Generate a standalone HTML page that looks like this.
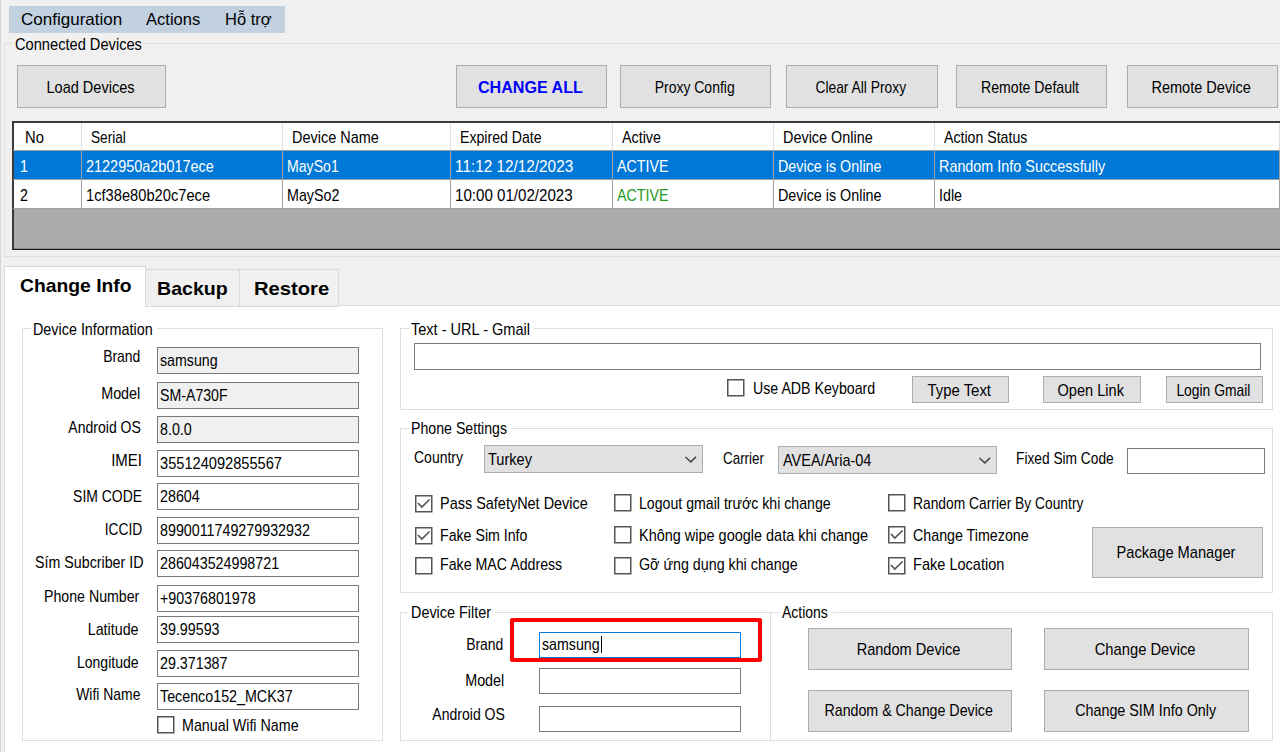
<!DOCTYPE html>
<html><head><meta charset="utf-8"><style>
html,body{margin:0;padding:0;}
body{width:1280px;height:752px;overflow:hidden;position:relative;background:#f0f0f0;font-family:"Liberation Sans",sans-serif;}
.a{position:absolute;box-sizing:border-box;}
.t{position:absolute;white-space:pre;line-height:1;}
</style></head><body>
<div class='a' style='left:0px;top:0px;width:1px;height:752px;background:#d6d6d6'></div>
<div class='a' style='left:9px;top:6px;width:276px;height:27px;background:#c2d1e0;'></div>
<span class='t' style='left:21.47px;top:11.43px;font-size:16.5px;transform:scaleX(1.031);transform-origin:0 0;color:#000;'>Configuration</span>
<span class='t' style='left:146.00px;top:11.43px;font-size:16.5px;transform:scaleX(1.002);transform-origin:0 0;color:#000;'>Actions</span>
<span class='t' style='left:225.00px;top:11.43px;font-size:16.5px;transform:scaleX(1.0);transform-origin:0 0;color:#000;'>Hỗ trợ</span>
<div class='a' style='left:4px;top:43px;width:1287px;height:1px;background:#dedede'></div>
<div class='a' style='left:4px;top:43px;width:1px;height:214px;background:#dedede'></div>
<div class='a' style='left:4px;top:256px;width:1287px;height:1px;background:#dedede'></div>
<div class='a' style='left:12.5px;top:41px;width:133.0px;height:5px;background:#f0f0f0;'></div>
<span class='t' style='left:14.64px;top:36.21px;font-size:17.0px;transform:scaleX(0.861);transform-origin:0 0;color:#000;'>Connected Devices</span>
<div class='a' style='left:17px;top:65px;width:149px;height:43px;background:#e1e1e1;box-sizing:border-box;border:1px solid #adadad;'></div>
<div class='a' style='left:-209.70px;top:79.21px;width:600px;text-align:center;line-height:1;'><span style='display:inline-block;white-space:pre;font-size:17.0px;line-height:1;transform:scaleX(0.8549);transform-origin:50% 0;color:#000;'>Load Devices</span></div>
<div class='a' style='left:456px;top:65px;width:151px;height:43px;background:#e1e1e1;box-sizing:border-box;border:1px solid #adadad;'></div>
<div class='a' style='left:230.30px;top:79.21px;width:600px;text-align:center;line-height:1;'><span style='display:inline-block;white-space:pre;font-size:17.0px;line-height:1;transform:scaleX(0.9473);transform-origin:50% 0;color:#0000ff;font-weight:bold;'>CHANGE ALL</span></div>
<div class='a' style='left:620px;top:65px;width:151px;height:43px;background:#e1e1e1;box-sizing:border-box;border:1px solid #adadad;'></div>
<div class='a' style='left:394.30px;top:79.21px;width:600px;text-align:center;line-height:1;'><span style='display:inline-block;white-space:pre;font-size:17.0px;line-height:1;transform:scaleX(0.8221);transform-origin:50% 0;color:#000;'>Proxy Config</span></div>
<div class='a' style='left:786px;top:65px;width:152px;height:43px;background:#e1e1e1;box-sizing:border-box;border:1px solid #adadad;'></div>
<div class='a' style='left:560.80px;top:79.21px;width:600px;text-align:center;line-height:1;'><span style='display:inline-block;white-space:pre;font-size:17.0px;line-height:1;transform:scaleX(0.8136);transform-origin:50% 0;color:#000;'>Clear All Proxy</span></div>
<div class='a' style='left:956px;top:65px;width:151px;height:43px;background:#e1e1e1;box-sizing:border-box;border:1px solid #adadad;'></div>
<div class='a' style='left:730.30px;top:79.21px;width:600px;text-align:center;line-height:1;'><span style='display:inline-block;white-space:pre;font-size:17.0px;line-height:1;transform:scaleX(0.8291);transform-origin:50% 0;color:#000;'>Remote Default</span></div>
<div class='a' style='left:1127px;top:65px;width:151px;height:43px;background:#e1e1e1;box-sizing:border-box;border:1px solid #adadad;'></div>
<div class='a' style='left:901.30px;top:79.21px;width:600px;text-align:center;line-height:1;'><span style='display:inline-block;white-space:pre;font-size:17.0px;line-height:1;transform:scaleX(0.8557);transform-origin:50% 0;color:#000;'>Remote Device</span></div>
<div class='a' style='left:12px;top:121px;width:1279px;height:129px;background:#ababab;box-sizing:border-box;border:2px solid #3a3a3a;border-right:none;border-bottom:1px solid #1e1e1e;'></div>
<div class='a' style='left:14px;top:248px;width:1277px;height:1px;background:#8c8c8c'></div>
<div class='a' style='left:14px;top:123px;width:1277px;height:27px;background:#ffffff;'></div>
<div class='a' style='left:14px;top:150px;width:1277px;height:29px;background:#0078d7;'></div>
<div class='a' style='left:14px;top:180px;width:1277px;height:29px;background:#ffffff;'></div>
<div class='a' style='left:13px;top:150px;width:1278px;height:1px;background:#a0a0a0'></div>
<div class='a' style='left:13px;top:179px;width:1278px;height:1px;background:#a0a0a0'></div>
<div class='a' style='left:13px;top:208px;width:1278px;height:1px;background:#a0a0a0'></div>
<div class='a' style='left:81px;top:123px;width:1px;height:27px;background:#e0e0e0'></div>
<div class='a' style='left:81px;top:150px;width:1px;height:59px;background:#a0a0a0'></div>
<div class='a' style='left:282px;top:123px;width:1px;height:27px;background:#e0e0e0'></div>
<div class='a' style='left:282px;top:150px;width:1px;height:59px;background:#a0a0a0'></div>
<div class='a' style='left:450px;top:123px;width:1px;height:27px;background:#e0e0e0'></div>
<div class='a' style='left:450px;top:150px;width:1px;height:59px;background:#a0a0a0'></div>
<div class='a' style='left:612px;top:123px;width:1px;height:27px;background:#e0e0e0'></div>
<div class='a' style='left:612px;top:150px;width:1px;height:59px;background:#a0a0a0'></div>
<div class='a' style='left:773px;top:123px;width:1px;height:27px;background:#e0e0e0'></div>
<div class='a' style='left:773px;top:150px;width:1px;height:59px;background:#a0a0a0'></div>
<div class='a' style='left:934px;top:123px;width:1px;height:27px;background:#e0e0e0'></div>
<div class='a' style='left:934px;top:150px;width:1px;height:59px;background:#a0a0a0'></div>
<div class='a' style='left:1279px;top:123px;width:1px;height:27px;background:#e0e0e0'></div>
<div class='a' style='left:1279px;top:150px;width:1px;height:59px;background:#a0a0a0'></div>
<span class='t' style='left:24.73px;top:129.41px;font-size:17.0px;transform:scaleX(0.87);transform-origin:0 0;color:#000;'>No</span>
<span class='t' style='left:91.20px;top:129.41px;font-size:17.0px;transform:scaleX(0.8);transform-origin:0 0;color:#000;'>Serial</span>
<span class='t' style='left:292.15px;top:129.41px;font-size:17.0px;transform:scaleX(0.851);transform-origin:0 0;color:#000;'>Device Name</span>
<span class='t' style='left:460.17px;top:129.41px;font-size:17.0px;transform:scaleX(0.8299);transform-origin:0 0;color:#000;'>Expired Date</span>
<span class='t' style='left:622.16px;top:129.41px;font-size:17.0px;transform:scaleX(0.84);transform-origin:0 0;color:#000;'>Active</span>
<span class='t' style='left:783.15px;top:129.41px;font-size:17.0px;transform:scaleX(0.8481);transform-origin:0 0;color:#000;'>Device Online</span>
<span class='t' style='left:944.17px;top:129.41px;font-size:17.0px;transform:scaleX(0.832);transform-origin:0 0;color:#000;'>Action Status</span>
<span class='t' style='left:19.66px;top:157.71px;font-size:17.0px;transform:scaleX(0.84);transform-origin:0 0;color:#ffffff;'>1</span>
<span class='t' style='left:85.65px;top:157.71px;font-size:17.0px;transform:scaleX(0.8503);transform-origin:0 0;color:#ffffff;'>2122950a2b017ece</span>
<span class='t' style='left:286.67px;top:157.71px;font-size:17.0px;transform:scaleX(0.8295);transform-origin:0 0;color:#ffffff;'>MaySo1</span>
<span class='t' style='left:454.60px;top:157.71px;font-size:17.0px;transform:scaleX(0.9015);transform-origin:0 0;color:#ffffff;'>11:12 12/12/2023</span>
<span class='t' style='left:616.66px;top:157.71px;font-size:17.0px;transform:scaleX(0.8377);transform-origin:0 0;color:#ffffff;'>ACTIVE</span>
<span class='t' style='left:777.66px;top:157.71px;font-size:17.0px;transform:scaleX(0.843);transform-origin:0 0;color:#ffffff;'>Device is Online</span>
<span class='t' style='left:938.65px;top:157.71px;font-size:17.0px;transform:scaleX(0.8456);transform-origin:0 0;color:#ffffff;'>Random Info Successfully</span>
<span class='t' style='left:19.66px;top:186.71px;font-size:17.0px;transform:scaleX(0.84);transform-origin:0 0;color:#000;'>2</span>
<span class='t' style='left:85.64px;top:186.71px;font-size:17.0px;transform:scaleX(0.8634);transform-origin:0 0;color:#000;'>1cf38e80b20c7ece</span>
<span class='t' style='left:286.66px;top:186.71px;font-size:17.0px;transform:scaleX(0.84);transform-origin:0 0;color:#000;'>MaySo2</span>
<span class='t' style='left:454.61px;top:186.71px;font-size:17.0px;transform:scaleX(0.8885);transform-origin:0 0;color:#000;'>10:00 01/02/2023</span>
<span class='t' style='left:616.66px;top:186.71px;font-size:17.0px;transform:scaleX(0.8377);transform-origin:0 0;color:#1e9a1e;'>ACTIVE</span>
<span class='t' style='left:777.66px;top:186.71px;font-size:17.0px;transform:scaleX(0.843);transform-origin:0 0;color:#000;'>Device is Online</span>
<span class='t' style='left:938.66px;top:186.71px;font-size:17.0px;transform:scaleX(0.84);transform-origin:0 0;color:#000;'>Idle</span>
<div class='a' style='left:4px;top:305px;width:1287px;height:456px;background:#ffffff;box-sizing:border-box;border:1px solid #dcdcdc;'></div>
<div class='a' style='left:145px;top:269px;width:96px;height:38px;background:#f0f0f0;box-sizing:border-box;border:1px solid #d9d9d9;'></div>
<div class='a' style='left:239px;top:269px;width:100px;height:38px;background:#f0f0f0;box-sizing:border-box;border:1px solid #d9d9d9;'></div>
<div class='a' style='left:4px;top:266px;width:142px;height:41px;background:#ffffff;box-sizing:border-box;border:1px solid #d9d9d9;border-bottom:none;'></div>
<span class='t' style='left:19.88px;top:276.32px;font-size:19px;transform:scaleX(1.0157);transform-origin:0 0;color:#000;font-weight:bold;'>Change Info</span>
<span class='t' style='left:156.97px;top:278.52px;font-size:19px;transform:scaleX(1.0299);transform-origin:0 0;color:#000;font-weight:bold;'>Backup</span>
<span class='t' style='left:253.64px;top:278.52px;font-size:19px;transform:scaleX(1.0623);transform-origin:0 0;color:#000;font-weight:bold;'>Restore</span>
<div class='a' style='left:22px;top:328px;width:361px;height:1px;background:#dedede'></div>
<div class='a' style='left:22px;top:328px;width:1px;height:413px;background:#dedede'></div>
<div class='a' style='left:22px;top:740px;width:361px;height:1px;background:#dedede'></div>
<div class='a' style='left:382px;top:328px;width:1px;height:413px;background:#dedede'></div>
<div class='a' style='left:30.5px;top:326px;width:126.0px;height:5px;background:#ffffff;'></div>
<span class='t' style='left:32.66px;top:320.71px;font-size:17.0px;transform:scaleX(0.8446);transform-origin:0 0;color:#000;'>Device Information</span>
<span class='t' style='right:1139.38px;top:347.91px;font-size:17.0px;transform:scaleX(0.8205);transform-origin:100% 0;color:#000;'>Brand</span>
<div class='a' style='left:157px;top:347px;width:202px;height:27px;background:#f0f0f0;box-sizing:border-box;border:1px solid #7a7a7a;'></div>
<span class='t' style='left:160.16px;top:351.51px;font-size:17.0px;transform:scaleX(0.8358);transform-origin:0 0;color:#000;'>samsung</span>
<span class='t' style='right:1139.35px;top:385.21px;font-size:17.0px;transform:scaleX(0.8455);transform-origin:100% 0;color:#000;'>Model</span>
<div class='a' style='left:157px;top:382px;width:202px;height:27px;background:#f0f0f0;box-sizing:border-box;border:1px solid #7a7a7a;'></div>
<span class='t' style='left:160.17px;top:386.51px;font-size:17.0px;transform:scaleX(0.8325);transform-origin:0 0;color:#000;'>SM-A730F</span>
<span class='t' style='right:1138.87px;top:419.21px;font-size:17.0px;transform:scaleX(0.8253);transform-origin:100% 0;color:#000;'>Android OS</span>
<div class='a' style='left:157px;top:416px;width:202px;height:27px;background:#f0f0f0;box-sizing:border-box;border:1px solid #7a7a7a;'></div>
<span class='t' style='left:160.16px;top:420.51px;font-size:17.0px;transform:scaleX(0.84);transform-origin:0 0;color:#000;'>8.0.0</span>
<span class='t' style='right:1138.12px;top:452.41px;font-size:17.0px;transform:scaleX(0.8812);transform-origin:100% 0;color:#000;'>IMEI</span>
<div class='a' style='left:157px;top:450px;width:202px;height:27px;background:#fff;box-sizing:border-box;border:1px solid #7a7a7a;'></div>
<span class='t' style='left:160.14px;top:454.51px;font-size:17.0px;transform:scaleX(0.86);transform-origin:0 0;color:#000;'>355124092855567</span>
<span class='t' style='right:1138.18px;top:487.51px;font-size:17.0px;transform:scaleX(0.8205);transform-origin:100% 0;color:#000;'>SIM CODE</span>
<div class='a' style='left:157px;top:483px;width:202px;height:27px;background:#fff;box-sizing:border-box;border:1px solid #7a7a7a;'></div>
<span class='t' style='left:160.16px;top:487.51px;font-size:17.0px;transform:scaleX(0.84);transform-origin:0 0;color:#000;'>28604</span>
<span class='t' style='right:1138.19px;top:521.41px;font-size:17.0px;transform:scaleX(0.8136);transform-origin:100% 0;color:#000;'>ICCID</span>
<div class='a' style='left:157px;top:517px;width:202px;height:27px;background:#fff;box-sizing:border-box;border:1px solid #7a7a7a;'></div>
<span class='t' style='left:160.16px;top:521.51px;font-size:17.0px;transform:scaleX(0.84);transform-origin:0 0;color:#000;'>8990011749279932932</span>
<span class='t' style='right:1136.66px;top:554.31px;font-size:17.0px;transform:scaleX(0.8375);transform-origin:100% 0;color:#000;'>Sím Subcriber ID</span>
<div class='a' style='left:157px;top:550px;width:202px;height:27px;background:#fff;box-sizing:border-box;border:1px solid #7a7a7a;'></div>
<span class='t' style='left:160.16px;top:554.51px;font-size:17.0px;transform:scaleX(0.84);transform-origin:0 0;color:#000;'>286043524998721</span>
<span class='t' style='right:1140.37px;top:587.91px;font-size:17.0px;transform:scaleX(0.8336);transform-origin:100% 0;color:#000;'>Phone Number</span>
<div class='a' style='left:157px;top:585px;width:202px;height:27px;background:#fff;box-sizing:border-box;border:1px solid #7a7a7a;'></div>
<span class='t' style='left:160.16px;top:589.51px;font-size:17.0px;transform:scaleX(0.84);transform-origin:0 0;color:#000;'>+90376801978</span>
<span class='t' style='right:1141.76px;top:620.91px;font-size:17.0px;transform:scaleX(0.839);transform-origin:100% 0;color:#000;'>Latitude</span>
<div class='a' style='left:157px;top:616px;width:202px;height:27px;background:#fff;box-sizing:border-box;border:1px solid #7a7a7a;'></div>
<span class='t' style='left:160.16px;top:620.51px;font-size:17.0px;transform:scaleX(0.84);transform-origin:0 0;color:#000;'>39.99593</span>
<span class='t' style='right:1141.17px;top:654.31px;font-size:17.0px;transform:scaleX(0.8274);transform-origin:100% 0;color:#000;'>Longitude</span>
<div class='a' style='left:157px;top:650px;width:202px;height:27px;background:#fff;box-sizing:border-box;border:1px solid #7a7a7a;'></div>
<span class='t' style='left:160.16px;top:654.51px;font-size:17.0px;transform:scaleX(0.84);transform-origin:0 0;color:#000;'>29.371387</span>
<span class='t' style='right:1139.78px;top:686.21px;font-size:17.0px;transform:scaleX(0.8192);transform-origin:100% 0;color:#000;'>Wifi Name</span>
<div class='a' style='left:157px;top:683px;width:202px;height:27px;background:#fff;box-sizing:border-box;border:1px solid #7a7a7a;'></div>
<span class='t' style='left:160.16px;top:687.51px;font-size:17.0px;transform:scaleX(0.84);transform-origin:0 0;color:#000;'>Tecenco152_MCK37</span>
<svg class='a' style='left:157px;top:716px' width='18' height='18' viewBox='0 0 18 18'><rect x='0.75' y='0.75' width='16.0' height='16.0' fill='#fff' stroke='#555' stroke-width='1.5'/></svg>
<span class='t' style='left:182.16px;top:717.21px;font-size:17.0px;transform:scaleX(0.8394);transform-origin:0 0;color:#000;'>Manual Wifi Name</span>
<div class='a' style='left:400px;top:328px;width:873px;height:1px;background:#dedede'></div>
<div class='a' style='left:400px;top:328px;width:1px;height:82px;background:#dedede'></div>
<div class='a' style='left:400px;top:409px;width:873px;height:1px;background:#dedede'></div>
<div class='a' style='left:1272px;top:328px;width:1px;height:82px;background:#dedede'></div>
<div class='a' style='left:409px;top:326px;width:125px;height:5px;background:#ffffff;'></div>
<span class='t' style='left:411.14px;top:320.71px;font-size:17.0px;transform:scaleX(0.8551);transform-origin:0 0;color:#000;'>Text - URL - Gmail</span>
<div class='a' style='left:414px;top:343px;width:847px;height:27px;background:#fff;box-sizing:border-box;border:1px solid #7a7a7a;'></div>
<svg class='a' style='left:727px;top:379px' width='18' height='18' viewBox='0 0 18 18'><rect x='0.75' y='0.75' width='16.0' height='16.0' fill='#fff' stroke='#555' stroke-width='1.5'/></svg>
<span class='t' style='left:753.17px;top:379.81px;font-size:17.0px;transform:scaleX(0.8345);transform-origin:0 0;color:#000;'>Use ADB Keyboard</span>
<div class='a' style='left:912px;top:376px;width:97px;height:27px;background:#e1e1e1;box-sizing:border-box;border:1px solid #adadad;'></div>
<div class='a' style='left:659.30px;top:381.51px;width:600px;text-align:center;line-height:1;'><span style='display:inline-block;white-space:pre;font-size:17.0px;line-height:1;transform:scaleX(0.8771);transform-origin:50% 0;color:#000;'>Type Text</span></div>
<div class='a' style='left:1043px;top:376px;width:98px;height:27px;background:#e1e1e1;box-sizing:border-box;border:1px solid #adadad;'></div>
<div class='a' style='left:790.80px;top:381.51px;width:600px;text-align:center;line-height:1;'><span style='display:inline-block;white-space:pre;font-size:17.0px;line-height:1;transform:scaleX(0.8579);transform-origin:50% 0;color:#000;'>Open Link</span></div>
<div class='a' style='left:1166px;top:376px;width:97px;height:27px;background:#e1e1e1;box-sizing:border-box;border:1px solid #adadad;'></div>
<div class='a' style='left:913.30px;top:381.51px;width:600px;text-align:center;line-height:1;'><span style='display:inline-block;white-space:pre;font-size:17.0px;line-height:1;transform:scaleX(0.8146);transform-origin:50% 0;color:#000;'>Login Gmail</span></div>
<div class='a' style='left:400px;top:428px;width:873px;height:1px;background:#dedede'></div>
<div class='a' style='left:400px;top:428px;width:1px;height:165px;background:#dedede'></div>
<div class='a' style='left:400px;top:592px;width:873px;height:1px;background:#dedede'></div>
<div class='a' style='left:1272px;top:428px;width:1px;height:165px;background:#dedede'></div>
<div class='a' style='left:409px;top:426px;width:102px;height:5px;background:#ffffff;'></div>
<span class='t' style='left:411.17px;top:420.21px;font-size:17.0px;transform:scaleX(0.8333);transform-origin:0 0;color:#000;'>Phone Settings</span>
<span class='t' style='left:413.93px;top:449.21px;font-size:17.0px;transform:scaleX(0.8233);transform-origin:0 0;color:#000;'>Country</span>
<div class='a' style='left:484px;top:445px;width:219px;height:28px;background:#e1e1e1;box-sizing:border-box;border:1px solid #adadad;'></div>
<span class='t' style='left:488.44px;top:451.21px;font-size:17.0px;transform:scaleX(0.8578);transform-origin:0 0;color:#000;'>Turkey</span>
<svg class='a' style='left:684px;top:455px' width='14' height='10'><path d='M1.4 2 L6.8 6.8 L12 1.8' fill='none' stroke='#4a4a4a' stroke-width='1.6'/></svg>
<span class='t' style='left:722.96px;top:449.71px;font-size:17.0px;transform:scaleX(0.7892);transform-origin:0 0;color:#000;'>Carrier</span>
<div class='a' style='left:778px;top:446px;width:219px;height:28px;background:#e1e1e1;box-sizing:border-box;border:1px solid #adadad;'></div>
<span class='t' style='left:782.85px;top:452.41px;font-size:17.0px;transform:scaleX(0.8534);transform-origin:0 0;color:#000;'>AVEA/Aria-04</span>
<svg class='a' style='left:978px;top:456px' width='14' height='10'><path d='M1.4 2 L6.8 6.8 L12 1.8' fill='none' stroke='#4a4a4a' stroke-width='1.6'/></svg>
<span class='t' style='left:1016.19px;top:449.71px;font-size:17.0px;transform:scaleX(0.8076);transform-origin:0 0;color:#000;'>Fixed Sim Code</span>
<div class='a' style='left:1127px;top:448px;width:138px;height:26px;background:#fff;box-sizing:border-box;border:1px solid #7a7a7a;'></div>
<svg class='a' style='left:415px;top:495px' width='18' height='18' viewBox='0 0 18 18'><rect x='0.75' y='0.75' width='16.0' height='16.0' fill='#fff' stroke='#555' stroke-width='1.5'/><path d='M3 8 L6.8 12 L14.6 4.5' fill='none' stroke='#555' stroke-width='1.7'/></svg>
<span class='t' style='left:440.45px;top:494.71px;font-size:17.0px;transform:scaleX(0.8503);transform-origin:0 0;color:#000;'>Pass SafetyNet Device</span>
<svg class='a' style='left:415px;top:527px' width='18' height='18' viewBox='0 0 18 18'><rect x='0.75' y='0.75' width='16.0' height='16.0' fill='#fff' stroke='#555' stroke-width='1.5'/><path d='M3 8 L6.8 12 L14.6 4.5' fill='none' stroke='#555' stroke-width='1.7'/></svg>
<span class='t' style='left:440.47px;top:526.71px;font-size:17.0px;transform:scaleX(0.8335);transform-origin:0 0;color:#000;'>Fake Sim Info</span>
<svg class='a' style='left:415px;top:557px' width='18' height='18' viewBox='0 0 18 18'><rect x='0.75' y='0.75' width='16.0' height='16.0' fill='#fff' stroke='#555' stroke-width='1.5'/></svg>
<span class='t' style='left:440.47px;top:556.41px;font-size:17.0px;transform:scaleX(0.8345);transform-origin:0 0;color:#000;'>Fake MAC Address</span>
<svg class='a' style='left:614px;top:494px' width='18' height='18' viewBox='0 0 18 18'><rect x='0.75' y='0.75' width='16.0' height='16.0' fill='#fff' stroke='#555' stroke-width='1.5'/></svg>
<span class='t' style='left:639.47px;top:494.71px;font-size:17.0px;transform:scaleX(0.8319);transform-origin:0 0;color:#000;'>Logout gmail trước khi change</span>
<svg class='a' style='left:614px;top:526px' width='18' height='18' viewBox='0 0 18 18'><rect x='0.75' y='0.75' width='16.0' height='16.0' fill='#fff' stroke='#555' stroke-width='1.5'/></svg>
<span class='t' style='left:639.45px;top:526.71px;font-size:17.0px;transform:scaleX(0.8507);transform-origin:0 0;color:#000;'>Không wipe google data khi change</span>
<svg class='a' style='left:614px;top:557px' width='18' height='18' viewBox='0 0 18 18'><rect x='0.75' y='0.75' width='16.0' height='16.0' fill='#fff' stroke='#555' stroke-width='1.5'/></svg>
<span class='t' style='left:639.46px;top:556.41px;font-size:17.0px;transform:scaleX(0.8396);transform-origin:0 0;color:#000;'>Gỡ ứng dụng khi change</span>
<svg class='a' style='left:888px;top:494px' width='18' height='18' viewBox='0 0 18 18'><rect x='0.75' y='0.75' width='16.0' height='16.0' fill='#fff' stroke='#555' stroke-width='1.5'/></svg>
<span class='t' style='left:913.19px;top:494.71px;font-size:17.0px;transform:scaleX(0.8124);transform-origin:0 0;color:#000;'>Random Carrier By Country</span>
<svg class='a' style='left:888px;top:526px' width='18' height='18' viewBox='0 0 18 18'><rect x='0.75' y='0.75' width='16.0' height='16.0' fill='#fff' stroke='#555' stroke-width='1.5'/><path d='M3 8 L6.8 12 L14.6 4.5' fill='none' stroke='#555' stroke-width='1.7'/></svg>
<span class='t' style='left:913.16px;top:526.71px;font-size:17.0px;transform:scaleX(0.8382);transform-origin:0 0;color:#000;'>Change Timezone</span>
<svg class='a' style='left:888px;top:557px' width='18' height='18' viewBox='0 0 18 18'><rect x='0.75' y='0.75' width='16.0' height='16.0' fill='#fff' stroke='#555' stroke-width='1.5'/><path d='M3 8 L6.8 12 L14.6 4.5' fill='none' stroke='#555' stroke-width='1.7'/></svg>
<span class='t' style='left:913.14px;top:556.41px;font-size:17.0px;transform:scaleX(0.8562);transform-origin:0 0;color:#000;'>Fake Location</span>
<div class='a' style='left:1092px;top:527px;width:171px;height:51px;background:#e1e1e1;box-sizing:border-box;border:1px solid #adadad;'></div>
<div class='a' style='left:876.30px;top:543.51px;width:600px;text-align:center;line-height:1;'><span style='display:inline-block;white-space:pre;font-size:17.0px;line-height:1;transform:scaleX(0.8613);transform-origin:50% 0;color:#000;'>Package Manager</span></div>
<div class='a' style='left:400px;top:612px;width:371px;height:1px;background:#dedede'></div>
<div class='a' style='left:400px;top:612px;width:1px;height:129px;background:#dedede'></div>
<div class='a' style='left:400px;top:740px;width:371px;height:1px;background:#dedede'></div>
<div class='a' style='left:770px;top:612px;width:1px;height:129px;background:#dedede'></div>
<div class='a' style='left:409px;top:610px;width:86px;height:5px;background:#ffffff;'></div>
<span class='t' style='left:411.15px;top:604.21px;font-size:17.0px;transform:scaleX(0.8462);transform-origin:0 0;color:#000;'>Device Filter</span>
<span class='t' style='right:776.43px;top:636.21px;font-size:17.0px;transform:scaleX(0.8205);transform-origin:100% 0;color:#000;'>Brand</span>
<span class='t' style='right:776.15px;top:671.51px;font-size:17.0px;transform:scaleX(0.8455);transform-origin:100% 0;color:#000;'>Model</span>
<span class='t' style='right:774.67px;top:706.41px;font-size:17.0px;transform:scaleX(0.8253);transform-origin:100% 0;color:#000;'>Android OS</span>
<div class='a' style='left:539px;top:632px;width:202px;height:26px;background:#fff;box-sizing:border-box;border:1px solid #0078d7;'></div>
<span class='t' style='left:542.16px;top:636.41px;font-size:17.0px;transform:scaleX(0.8358);transform-origin:0 0;color:#000;'>samsung</span>
<div class='a' style='left:601px;top:636px;width:1px;height:17px;background:#000'></div>
<div class='a' style='left:539px;top:668px;width:202px;height:26px;background:#fff;box-sizing:border-box;border:1px solid #7a7a7a;'></div>
<div class='a' style='left:539px;top:706px;width:202px;height:26px;background:#fff;box-sizing:border-box;border:1px solid #7a7a7a;'></div>
<div class='a' style='left:510px;top:618px;width:252px;height:44px;box-sizing:border-box;border:4px solid #ff0000;border-radius:2px'></div>
<div class='a' style='left:770px;top:612px;width:503px;height:1px;background:#dedede'></div>
<div class='a' style='left:770px;top:612px;width:1px;height:129px;background:#dedede'></div>
<div class='a' style='left:770px;top:740px;width:503px;height:1px;background:#dedede'></div>
<div class='a' style='left:1272px;top:612px;width:1px;height:129px;background:#dedede'></div>
<div class='a' style='left:779.8px;top:610px;width:53.0px;height:5px;background:#ffffff;'></div>
<span class='t' style='left:781.98px;top:604.01px;font-size:17.0px;transform:scaleX(0.822);transform-origin:0 0;color:#000;'>Actions</span>
<div class='a' style='left:808px;top:628px;width:204px;height:42px;background:#e1e1e1;box-sizing:border-box;border:1px solid #adadad;'></div>
<div class='a' style='left:608.80px;top:641.01px;width:600px;text-align:center;line-height:1;'><span style='display:inline-block;white-space:pre;font-size:17.0px;line-height:1;transform:scaleX(0.8571);transform-origin:50% 0;color:#000;'>Random Device</span></div>
<div class='a' style='left:1044px;top:628px;width:205px;height:42px;background:#e1e1e1;box-sizing:border-box;border:1px solid #adadad;'></div>
<div class='a' style='left:845.30px;top:641.01px;width:600px;text-align:center;line-height:1;'><span style='display:inline-block;white-space:pre;font-size:17.0px;line-height:1;transform:scaleX(0.8678);transform-origin:50% 0;color:#000;'>Change Device</span></div>
<div class='a' style='left:808px;top:690px;width:204px;height:42px;background:#e1e1e1;box-sizing:border-box;border:1px solid #adadad;'></div>
<div class='a' style='left:608.80px;top:702.31px;width:600px;text-align:center;line-height:1;'><span style='display:inline-block;white-space:pre;font-size:17.0px;line-height:1;transform:scaleX(0.8365);transform-origin:50% 0;color:#000;'>Random &amp; Change Device</span></div>
<div class='a' style='left:1044px;top:690px;width:205px;height:42px;background:#e1e1e1;box-sizing:border-box;border:1px solid #adadad;'></div>
<div class='a' style='left:845.30px;top:702.31px;width:600px;text-align:center;line-height:1;'><span style='display:inline-block;white-space:pre;font-size:17.0px;line-height:1;transform:scaleX(0.8428);transform-origin:50% 0;color:#000;'>Change SIM Info Only</span></div>
</body></html>
